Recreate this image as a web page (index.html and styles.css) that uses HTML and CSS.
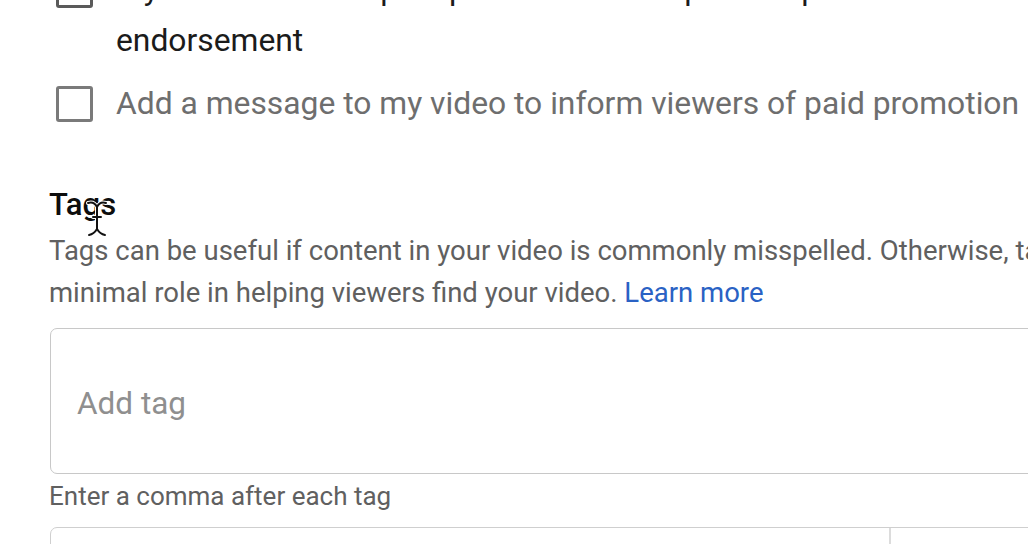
FILE: index.html
```html
<!DOCTYPE html>
<html>
<head>
<meta charset="UTF-8">
<title>Video details - Tags</title>
<link rel="stylesheet" href="styles.css">
</head>
<body>

<div class="page">

	<!-- paid promotion -->
	<div class="check-row">
		<span class="box dark"></span>
		<span class="label">My video contains paid promotion like a product placement or endorsement</span>
	</div>
	<div class="check-row second">
		<span class="box"></span>
		<span class="label muted">Add a message to my video to inform viewers of paid promotion</span>
	</div>

	<!-- tags -->
	<div class="tags">
		<h2 class="title">Tags</h2>
		<p class="desc">Tags can be useful if content in your video is commonly misspelled. Otherwise, tags play a minimal role in helping viewers find your video. <a href="#" class="link">Learn more</a></p>

		<div class="field">
			<span class="placeholder">Add tag</span>
		</div>
		<p class="hint">Enter a comma after each tag</p>

		<div class="selects">
			<div class="sel"></div>
			<div class="sel right"></div>
		</div>
	</div>

	<svg class="cursor" width="24" height="40" viewBox="0 0 24 40">
		<path d="M3 5 Q9 3 12 9 Q15 3 21 5 M12 9 V31 M8 19 H16 M12 31 Q9 36 4 37 M12 31 Q15 36 20 37" fill="none" stroke="#fff" stroke-width="4" stroke-linecap="round"/>
		<path d="M3 5 Q9 3 12 9 Q15 3 21 5 M12 9 V31 M8 19 H16 M12 31 Q9 36 4 37 M12 31 Q15 36 20 37" fill="none" stroke="#111" stroke-width="2" stroke-linecap="round"/>
	</svg>

</div>

</body>
</html>
```

FILE: styles.css
```css
html, body { margin: 0; overflow: hidden; }
body
{
	background-color: #fff;
	font-family: Roboto, "Noto Sans", sans-serif;
	color: #0f0f0f;
}

.page
{
	position: relative;
	margin-top: -36px;
	height: 640px;
}

/* checkbox rows */
.check-row
{
	display: flex;
	align-items: flex-start;
	gap: 23px;
	padding-left: 56px;
	width: 960px;
	font-size: 31.8px;
	line-height: 51px;
}
.check-row.second
{
	margin-top: 12px;
	white-space: nowrap;
}
.box
{
	flex: none;
	width: 31px;
	height: 30px;
	margin-top: 8px;
	border: 3px solid #7a7a7a;
	border-radius: 3px;
}
.box.dark { border-color: #5a5a5a; }
.label { color: #1b1b1b; }
.label.muted { color: #6e6e6e; }

/* tags section */
.tags
{
	padding-left: 49px;
	width: 1120px;
}
.title
{
	margin: 60px 0 0 0;
	font-size: 31px;
	font-weight: 500;
	line-height: 32px;
	color: #0d0d0d;
}
.desc
{
	margin: 9px 0 0 0;
	font-size: 27.5px;
	line-height: 42px;
	color: #606060;
}
.link
{
	color: #2a62c4;
	text-decoration: none;
}

.field
{
	margin-top: 14px;
	margin-left: 1px;
	height: 146px;
	border: 1px solid #c8c8c8;
	border-radius: 7px;
	box-sizing: border-box;
	padding: 55px 0 0 26px;
}
.placeholder
{
	display: block;
	font-size: 31.5px;
	line-height: 40px;
	color: #8f8f8f;
}
.hint
{
	margin: 6px 0 0 0;
	font-size: 26px;
	line-height: 32px;
	color: #606060;
}

.selects
{
	display: flex;
	margin-top: 15px;
	margin-left: 1px;
	height: 100px;
	border: 1px solid #cfcfcf;
	border-radius: 7px;
}
.sel { width: 838px; }
.sel.right
{
	flex: 1;
	border-left: 2px solid #dcdcdc;
}

.cursor
{
	position: absolute;
	left: 85px;
	top: 234px;
}
```
